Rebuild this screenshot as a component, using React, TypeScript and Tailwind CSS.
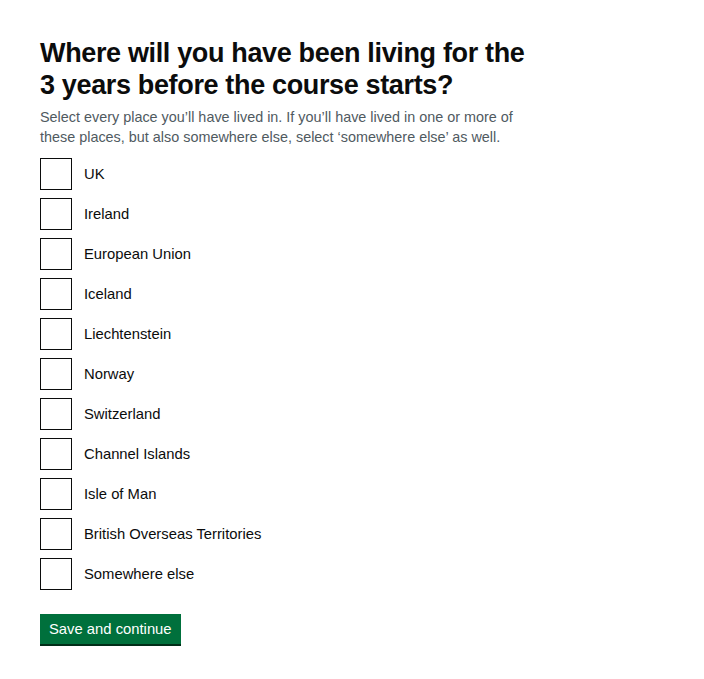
const places = [
  'UK',
  'Ireland',
  'European Union',
  'Iceland',
  'Liechtenstein',
  'Norway',
  'Switzerland',
  'Channel Islands',
  'Isle of Man',
  'British Overseas Territories',
  'Somewhere else',
];

export default function App() {
  return (
    <main className="min-h-screen bg-white px-10 pt-[37px] pb-10 font-['Liberation_Sans',Arial,sans-serif] text-[#0b0c0c]">
      <form className="flex flex-col items-start">
        <fieldset className="flex flex-col">
          <legend className="max-w-[494px] text-[27px] font-bold leading-[32px] tracking-[-0.35px]">
            Where will you have been living for the 3 years before the course starts?
          </legend>
          <p className="mt-[6px] max-w-[480px] text-[14.4px] leading-[20px] text-[#505a5f]">
            Select every place you’ll have lived in. If you’ll have lived in one or more of these places, but also somewhere else, select ‘somewhere else’ as well.
          </p>

          <div className="mt-[11px] flex flex-col gap-2">
            {places.map((place) => (
              <label key={place} className="flex items-center gap-3">
                <input
                  type="checkbox"
                  className="h-8 w-8 shrink-0 appearance-none border border-[#0b0c0c] bg-white"
                />
                <span className="text-[14.8px] leading-5">{place}</span>
              </label>
            ))}
          </div>
        </fieldset>

        <button
          type="button"
          className="mt-6 h-[30px] bg-[#00703c] px-[9px] text-[14.8px] leading-5 text-white shadow-[0_2px_0_#002d18]"
        >
          Save and continue
        </button>
      </form>
    </main>
  );
}
